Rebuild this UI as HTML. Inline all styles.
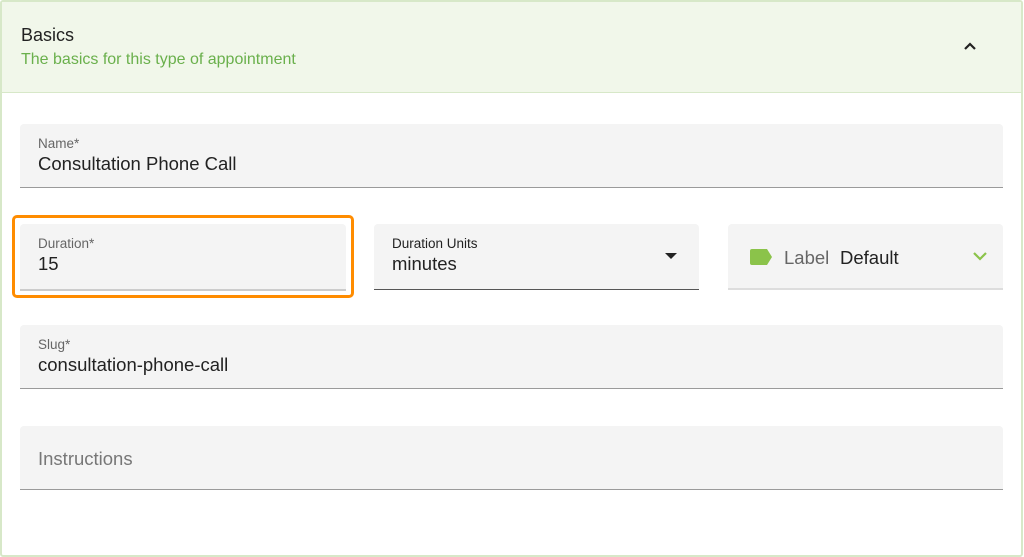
<!DOCTYPE html>
<html><head><style>
body{margin:0;width:1024px;height:557px;background:#fff;font-family:"Liberation Sans",Arial,sans-serif;position:relative;overflow:hidden}
.card{position:absolute;left:0;top:0;width:1019px;height:553px;border:2px solid #d7e8c8;border-radius:3px}
.hdr{position:absolute;left:0;top:0;right:0;height:90px;background:#f1f7ea;border-bottom:1px solid #d7e8c8}
.t{position:absolute;left:19px;top:23px;font-size:18px;color:#222}
.s{position:absolute;left:19px;top:49px;font-size:16px;color:#6ab04c}
.f{position:absolute;background:#f4f4f4;border-bottom:1px solid #9a9a9a;border-radius:4px 4px 0 0}
.l{position:absolute;left:18px;top:12px;font-size:13.5px;color:#666}
.v{position:absolute;left:18px;top:29px;font-size:18.5px;color:#222}
</style></head><body>
<div class="card">
<div class="hdr"><div class="t">Basics</div><div class="s">The basics for this type of appointment</div>
<svg style="position:absolute;left:961px;top:39px" width="14" height="10"><path d="M2 8 L7 3 L12 8" stroke="#222" stroke-width="2.2" fill="none"/></svg></div>
</div>
<div class="f" style="left:20px;top:124px;width:983px;height:63px"><div class="l">Name*</div><div class="v">Consultation Phone Call</div></div>
<div style="position:absolute;left:12px;top:215px;width:336px;height:77px;border:3px solid #ff8c00;border-radius:5px"></div>
<div class="f" style="left:20px;top:224px;width:326px;height:65px;border-bottom-color:#ccc;border-bottom-width:2px"><div class="l">Duration*</div><div class="v">15</div></div>
<div class="f" style="left:374px;top:224px;width:325px;height:65px;border-bottom-color:#555"><div class="l" style="color:#222">Duration Units</div><div class="v">minutes</div>
<svg style="position:absolute;left:291px;top:29px" width="12" height="7"><path d="M0 0 L12 0 L6 6Z" fill="#222"/></svg></div>
<div class="f" style="left:728px;top:224px;width:275px;height:64px;border-bottom:2px solid #ddd">
<svg style="position:absolute;left:22px;top:25px" width="23" height="16"><path d="M0 2 Q0 0 2 0 L17 0 L22 8 L17 16 L2 16 Q0 16 0 14Z" fill="#8bc34a"/></svg>
<div style="position:absolute;left:56px;top:23px;font-size:18.5px;color:#666">Label</div>
<div style="position:absolute;left:112px;top:23px;font-size:18.5px;color:#222">Default</div>
<svg style="position:absolute;left:245px;top:28px" width="14" height="9"><path d="M1 1 L7 7 L13 1" stroke="#8bc34a" stroke-width="2.2" fill="none"/></svg></div>
<div class="f" style="left:20px;top:325px;width:983px;height:63px"><div class="l">Slug*</div><div class="v">consultation-phone-call</div></div>
<div class="f" style="left:20px;top:426px;width:983px;height:63px"><div class="v" style="top:22px;color:#777">Instructions</div></div>
</body></html>
